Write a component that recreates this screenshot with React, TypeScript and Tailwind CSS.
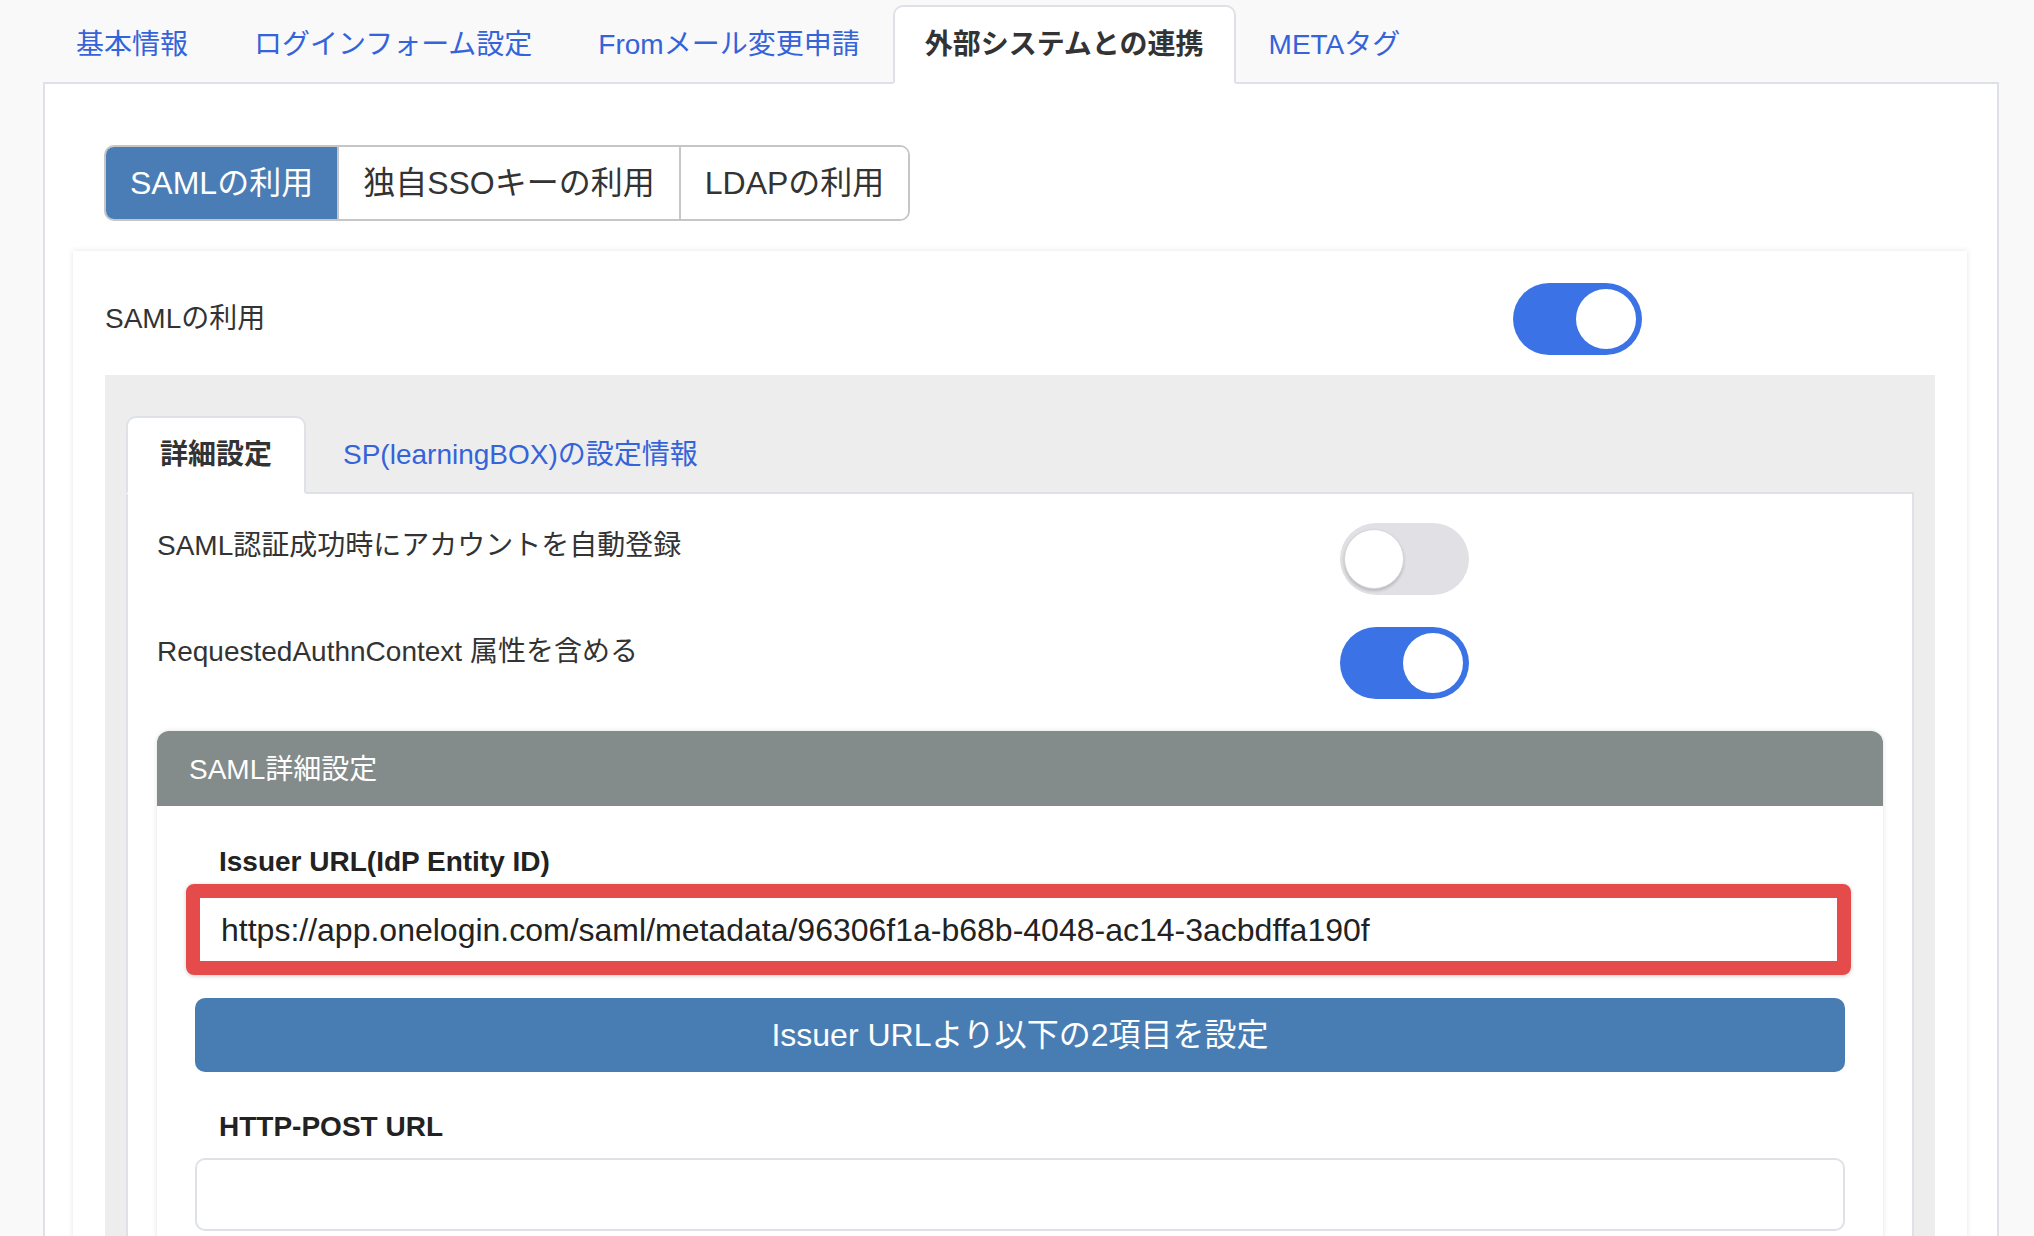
import { useState } from "react";

const tabs = ["基本情報", "ログインフォーム設定", "Fromメール変更申請", "外部システムとの連携", "METAタグ"];
const modes = ["SAMLの利用", "独自SSOキーの利用", "LDAPの利用"];

function Toggle({ on }: { on: boolean }) {
  return (
    <div
      className={`relative h-[72px] w-[129px] flex-none rounded-full ${
        on ? "bg-[#3b72e6]" : "bg-[#e1e1e5]"
      }`}
    >
      <div
        className={`absolute top-[6px] h-[60px] w-[60px] rounded-full bg-white ${
          on
            ? "right-[6px]"
            : "left-[4px] border border-[#d6d6d6] shadow-[0_2px_3px_rgba(0,0,0,0.18)]"
        }`}
      />
    </div>
  );
}

export default function App() {
  const [activeTab] = useState(3);
  const [mode] = useState(0);

  return (
    <div className="min-h-screen bg-[#f9f9f9] font-['Liberation_Sans','Noto_Sans_CJK_JP',sans-serif] text-[28px] text-[#333]">
      <div className="ml-[43px] w-[1956px]">
        {/* top tabs */}
        <div className="flex border-b-2 border-[#dee2e6] pt-[5px]">
          {tabs.map((t, i) => (
            <div
              key={t}
              className={`-mb-[2px] rounded-t-[10px] border-2 pt-[16px] pb-[15px] leading-[44px] ${
                i === activeTab
                  ? "border-[#dee2e6] border-b-white bg-white px-[30px] font-bold text-[#333]"
                  : "border-transparent px-[31px] text-[#3563d9]"
              }`}
            >
              {t}
            </div>
          ))}
        </div>

        <div className="border-x-2 border-[#dee2e6] bg-white pl-[59px] pt-[61px] pb-[200px]">
          {/* mode buttons */}
          <div className="flex w-fit overflow-hidden rounded-[10px] border-2 border-[#c6c6c6]">
            {modes.map((m, i) => (
              <div
                key={m}
                className={`flex h-[72px] items-center px-[24px] text-[32px] ${
                  i > 0 ? "border-l-2 border-[#c6c6c6]" : ""
                } ${i === mode ? "bg-[#4a7db5] text-white" : "bg-white text-[#333]"}`}
              >
                {m}
              </div>
            ))}
          </div>

          {/* SAML card */}
          <div className="mt-[30px] mr-[30px] -ml-[31px] bg-white px-[32px] pt-[32px] shadow-[0_0_6px_rgba(0,0,0,0.1)]">
            <div className="flex items-center">
              <div className="w-[1408px] flex-none">SAMLの利用</div>
              <Toggle on />
            </div>

            <div className="mt-[20px] bg-[#ededed] px-[21px] pt-[41px]">
              <div className="flex border-b-2 border-[#dee2e6]">
                <div className="-mb-[2px] rounded-t-[10px] border-2 border-[#dee2e6] border-b-white bg-white px-[32px] pt-[16px] pb-[16px] font-bold leading-[42px] text-[#333]">
                  詳細設定
                </div>
                <div className="-mb-[2px] border-2 border-transparent px-[35px] pt-[16px] pb-[16px] leading-[42px] text-[#3563d9]">
                  SP(learningBOX)の設定情報
                </div>
              </div>

              <div className="border-x-2 border-[#dee2e6] bg-white px-[29px] pt-[29px]">
                <div className="flex items-start">
                  <div className="w-[1183px] flex-none pt-[2px] leading-[42px]">SAML認証成功時にアカウントを自動登録</div>
                  <Toggle on={false} />
                </div>
                <div className="mt-[32px] flex items-start">
                  <div className="w-[1183px] flex-none pt-[4px] leading-[42px]">RequestedAuthnContext 属性を含める</div>
                  <Toggle on />
                </div>

                {/* SAML detail */}
                <div className="mt-[32px] overflow-hidden rounded-t-[12px] bg-white shadow-[0_0_5px_rgba(0,0,0,0.12)]">
                  <div className="flex h-[75px] items-center bg-[#838b8b] px-[32px] pt-[2px] text-white">SAML詳細設定</div>
                  <div className="px-[38px] pt-[35px] pb-[60px]">
                    <div className="pl-[24px] font-bold leading-[42px] text-[#222]">Issuer URL(IdP Entity ID)</div>
                    <div className="relative mt-[10px]">
                      <div className="flex h-[73px] items-center rounded-[10px] border-2 border-[#dee2e6] px-[24px] text-[32px] text-[#222]">
                        https://app.onelogin.com/saml/metadata/96306f1a-b68b-4048-ac14-3acbdffa190f
                      </div>
                      <div className="absolute -top-[9px] -bottom-[9px] -left-[9px] -right-[6px] rounded-[8px] border-[14px] border-[#e54b4b] shadow-[0_1px_4px_rgba(0,0,0,0.2)]" />
                    </div>
                    <div className="mt-[32px] flex h-[74px] items-center justify-center rounded-[10px] bg-[#487db4] text-[32px] text-white">
                      Issuer URLより以下の2項目を設定
                    </div>
                    <div className="mt-[34px] pl-[24px] font-bold leading-[42px] text-[#222]">HTTP-POST URL</div>
                    <div className="mt-[10px] h-[73px] rounded-[10px] border-2 border-[#dee2e6]" />
                  </div>
                </div>
              </div>
            </div>
          </div>
        </div>
      </div>
    </div>
  );
}
